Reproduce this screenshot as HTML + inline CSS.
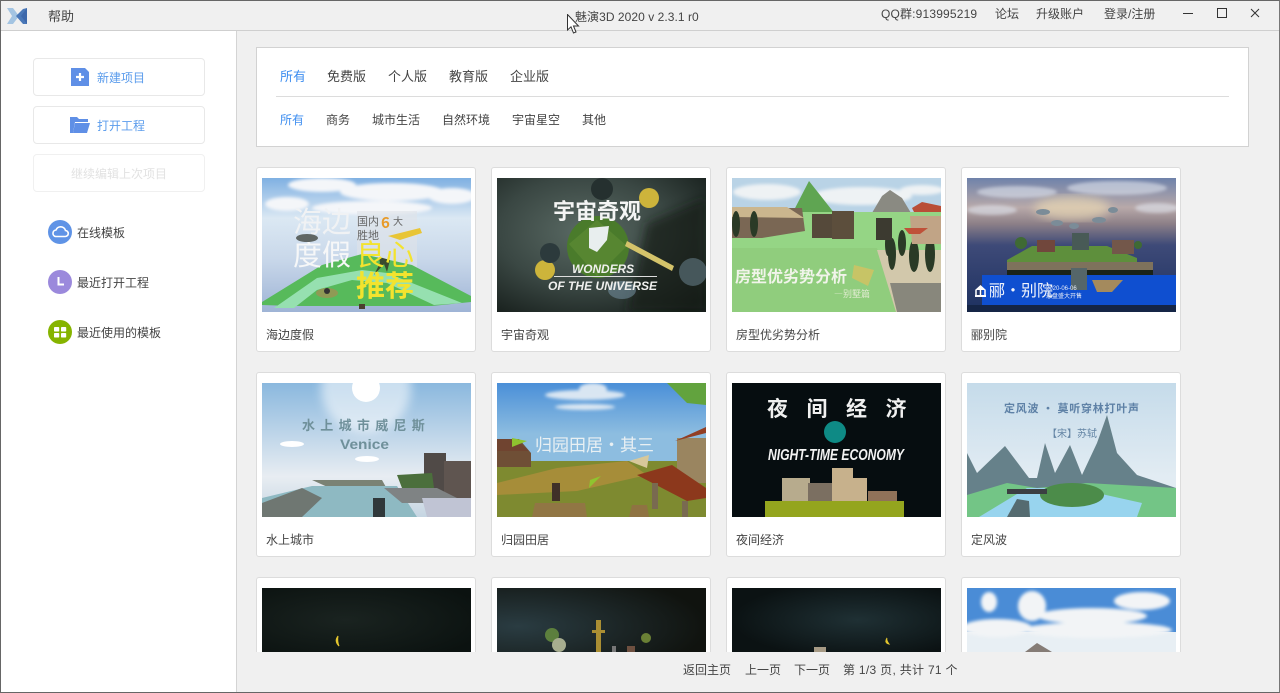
<!DOCTYPE html>
<html lang="zh"><head><meta charset="utf-8"><title>魅演3D</title>
<style>
*{margin:0;padding:0;box-sizing:border-box}
html,body{width:1280px;height:693px;overflow:hidden;background:#f0f0f0}
body{position:relative;font-family:"Liberation Sans","Noto Sans CJK SC",sans-serif;font-size:12px;color:#444}
.a{position:absolute;white-space:nowrap;line-height:16px}
.tb{position:absolute;left:0;top:0;width:1280px;height:31px;background:#f0f0f0;border-bottom:1px solid #cfcfcf}
.side{position:absolute;left:0;top:31px;width:237px;height:662px;background:#fff;border-right:1px solid #d4d4d4}
.btn{position:absolute;left:33px;width:172px;height:38px;border:1px solid #e8e8e8;border-radius:4px;background:#fff}
.panel{position:absolute;left:256px;top:47px;width:993px;height:100px;background:#fff;border:1px solid #d2d2d2}
.clip{position:absolute;left:237px;top:31px;width:1043px;height:621px;overflow:hidden}
.card{position:absolute;width:220px;height:185px;background:#fff;border:1px solid #dcdcdc;border-radius:3px}
.card svg{position:absolute;left:5px;top:10px;width:209px;height:134px;display:block}
.card span{position:absolute;left:9px;top:159px;line-height:16px;color:#444;white-space:nowrap}
.card.s{height:75px;border-bottom:0;border-radius:3px 3px 0 0}
.card.s svg{height:64px}
.frame{position:absolute;left:0;top:0;width:1280px;height:693px;border:1px solid #666;border-right-color:#777;pointer-events:none}
.cn{font-family:"Noto Sans CJK SC",sans-serif;font-weight:700}
.l{font-family:"Noto Sans CJK SC",sans-serif;font-weight:400}
</style></head><body>
<div class="tb"></div>
<svg class="a" style="left:6px;top:7px" width="22" height="18" viewBox="0 0 22 18"><path d="M1 1 L7 1 L13 9 L7 17 L1 17 L6 9Z" fill="#a3c4e2"/><path d="M21 1 L21 17 L17 17 L10 9 L17 2Z" fill="#4a78b8"/><path d="M21 1L21 17L15 9Z" fill="#3d68ab"/></svg>
<div class="a" style="left:48px;top:9px;font-size:13px;color:#444">帮助</div>
<div class="a" style="left:575px;top:9px;color:#444;letter-spacing:.05px">魅演3D 2020 v 2.3.1 r0</div>
<div class="a" style="left:881px;top:6px;color:#444;letter-spacing:.17px">QQ群:913995219</div>
<div class="a" style="left:995px;top:6px;color:#444">论坛</div>
<div class="a" style="left:1036px;top:6px;color:#444">升级账户</div>
<div class="a" style="left:1104px;top:6px;color:#444">登录/注册</div>
<svg class="a" style="left:1180px;top:5px" width="90" height="16" viewBox="0 0 90 16" fill="none" stroke="#333"><path d="M3 8.500H13"/><rect x="37.500" y="3.500" width="9" height="9"/><path d="M71 4L79 12M79 4L71 12"/></svg>

<div class="side"></div>
<div class="btn" style="top:58px"></div>
<div class="btn" style="top:106px"></div>
<div class="btn" style="top:154px;border-color:#f0f0f0"></div>
<svg class="a" style="left:71px;top:68px" width="18" height="18" viewBox="0 0 18 18"><path d="M0 0H14L18 4V18H0Z" fill="#5f8fe6"/><path d="M9 5V13M5 9H13" stroke="#fff" stroke-width="2.200"/></svg>
<svg class="a" style="left:70px;top:116px" width="20" height="18" viewBox="0 0 20 18"><path d="M0 1H7L9 3H18V6H5L3 17H0Z" fill="#5f8fe6"/><path d="M5 7H20L17 17H3Z" fill="#5f8fe6"/></svg>
<div class="a" style="left:97px;top:70px;color:#5b9cec">新建项目</div>
<div class="a" style="left:97px;top:118px;color:#5b9cec">打开工程</div>
<div class="a" style="left:71px;top:166px;color:#e2e2e2">继续编辑上次项目</div>
<svg class="a" style="left:48px;top:220px" width="24" height="24" viewBox="0 0 24 24"><circle cx="12" cy="12" r="12" fill="#5f93e6"/><path d="M7.500 16.500H17a3 3 0 0 0 .5-6 5 5 0 0 0-9.500-.5 3.300 3.300 0 0 0-.5 6.500Z" fill="none" stroke="#fff" stroke-width="1.600"/></svg>
<svg class="a" style="left:48px;top:270px" width="24" height="24" viewBox="0 0 24 24"><circle cx="12" cy="12" r="12" fill="#9b89dc"/><path d="M10.500 7V14.500H16" fill="none" stroke="#fff" stroke-width="2"/></svg>
<svg class="a" style="left:48px;top:320px" width="24" height="24" viewBox="0 0 24 24"><circle cx="12" cy="12" r="12" fill="#86b400"/><g fill="#fff"><rect x="6" y="7" width="5.200" height="4.500" rx=".8"/><rect x="13" y="7" width="5.200" height="4.500" rx=".8"/><rect x="6" y="13" width="5.200" height="4.500" rx=".8"/><rect x="13" y="13" width="5.200" height="4.500" rx=".8"/></g></svg>
<div class="a" style="left:77px;top:225px">在线模板</div>
<div class="a" style="left:77px;top:275px">最近打开工程</div>
<div class="a" style="left:77px;top:325px">最近使用的模板</div>

<div class="panel"></div>
<div class="a" style="left:280px;top:69px;font-size:13px;color:#3e8ef0">所有</div>
<div class="a" style="left:327px;top:69px;font-size:13px">免费版</div>
<div class="a" style="left:388px;top:69px;font-size:13px">个人版</div>
<div class="a" style="left:449px;top:69px;font-size:13px">教育版</div>
<div class="a" style="left:510px;top:69px;font-size:13px">企业版</div>
<div class="a" style="left:276px;top:96px;width:953px;height:1px;background:#dcdcdc"></div>
<div class="a" style="left:280px;top:112px;color:#3e8ef0">所有</div>
<div class="a" style="left:326px;top:112px">商务</div>
<div class="a" style="left:372px;top:112px">城市生活</div>
<div class="a" style="left:442px;top:112px">自然环境</div>
<div class="a" style="left:512px;top:112px">宇宙星空</div>
<div class="a" style="left:582px;top:112px">其他</div>

<div class="clip">
<svg width="0" height="0" style="position:absolute"><defs>
<filter id="b1"><feGaussianBlur stdDeviation="1.500"/></filter>
<filter id="b3"><feGaussianBlur stdDeviation="5"/></filter>
<linearGradient id="sky1" x1="0" y1="0" x2="0" y2="1"><stop offset="0" stop-color="#7fb0e2"/><stop offset=".3" stop-color="#dbe8f3"/><stop offset=".6" stop-color="#c9d8ea"/><stop offset="1" stop-color="#9fb4d6"/></linearGradient>
<linearGradient id="sky4" x1="0" y1="0" x2="0" y2="1"><stop offset="0" stop-color="#6f82aa"/><stop offset=".22" stop-color="#b8a9a9"/><stop offset=".34" stop-color="#8d8088"/><stop offset=".5" stop-color="#3e4a78"/><stop offset="1" stop-color="#1d3160"/></linearGradient>
<linearGradient id="sky5" x1="0" y1="0" x2="0" y2="1"><stop offset="0" stop-color="#8ab8de"/><stop offset=".7" stop-color="#e8edf2"/><stop offset="1" stop-color="#c5d5e2"/></linearGradient>
<linearGradient id="sky6" x1="0" y1="0" x2="0" y2="1"><stop offset="0" stop-color="#4a8fd8"/><stop offset=".6" stop-color="#8dbde0"/></linearGradient>
<linearGradient id="sky8" x1="0" y1="0" x2="0" y2="1"><stop offset="0" stop-color="#c5dbea"/><stop offset=".7" stop-color="#e2ecf3"/></linearGradient>
<radialGradient id="sp2" cx=".42" cy=".4" r=".75"><stop offset="0" stop-color="#5a6a64"/><stop offset=".55" stop-color="#3a4743"/><stop offset="1" stop-color="#171f1c"/></radialGradient>
<radialGradient id="sp9" cx=".4" cy=".5" r=".7"><stop offset="0" stop-color="#1a2320"/><stop offset="1" stop-color="#0b1210"/></radialGradient>
<radialGradient id="sp10" cx=".1" cy=".6" r=".9"><stop offset="0" stop-color="#2a3c42"/><stop offset="1" stop-color="#10130f"/></radialGradient>
<radialGradient id="sp11" cx=".6" cy=".5" r=".6"><stop offset="0" stop-color="#1f3034"/><stop offset="1" stop-color="#0b1213"/></radialGradient>
</defs></svg>

<div class="card" style="left:19px;top:136px">
<svg viewBox="0 0 209 134"><rect width="209" height="134" fill="url(#sky1)"/>
<g fill="#f4f6f9" filter="url(#b1)"><ellipse cx="60" cy="7" rx="34" ry="7"/><ellipse cx="130" cy="14" rx="52" ry="9"/><ellipse cx="25" cy="26" rx="22" ry="7"/><ellipse cx="190" cy="18" rx="24" ry="8"/><ellipse cx="110" cy="30" rx="60" ry="7"/></g>
<rect x="95" y="33" width="60" height="60" fill="#dfe3e8" opacity=".6"/>
<path d="M0 124L60 87L100 76L150 87L209 118V124L170 128H30L0 127Z" fill="#57ba5b"/>
<path d="M12 130L55 100L100 92L125 95L200 125L172 127L125 105L90 102L55 112L32 130Z" fill="#96e0b0"/>
<rect x="97" y="126" width="6" height="5" fill="#4b3f2d"/>
<ellipse cx="65" cy="115" rx="11" ry="5" fill="#8f9a55"/><circle cx="65" cy="113" r="3" fill="#333"/>
<path d="M117 79L128 82L125 94L122 86L112 97L118 85Z" fill="#3a4a2e"/>
<path d="M126 58L158 50L160 55L138 62Z" fill="#e8c536"/>
<text x="31" y="54" class="l" font-size="29" fill="#f0f2f4">海边</text>
<text x="31" y="87" class="l" font-size="29" fill="#f6f7f8">度假</text>
<text x="94" y="87" class="l" font-size="29" fill="#f3e32e">良心</text>
<text x="94" y="118" class="cn" font-size="29" fill="#f3e32e">推荐</text>
<text x="95" y="47" class="l" font-size="11" fill="#666">国内</text>
<text x="119" y="50" class="cn" font-size="15" fill="#e89a28">6</text>
<text x="131" y="47" class="l" font-size="10" fill="#666">大</text>
<text x="95" y="61" class="l" font-size="11" fill="#666">胜地</text>
<ellipse cx="45" cy="60" rx="11" ry="4" fill="#5f6664"/>
</svg><span>海边度假</span></div>

<div class="card" style="left:254px;top:136px">
<svg viewBox="0 0 209 134"><rect width="209" height="134" fill="url(#sp2)"/>
<path d="M150 45L209 20V134H130Z" fill="#141b18" opacity=".7" filter="url(#b3)"/>
<circle cx="101" cy="69" r="31" fill="#4a7b2b"/><path d="M72 66L100 42L130 68L100 98Z" fill="#5c8b34" opacity=".7"/>
<circle cx="105" cy="11" r="11" fill="#25302f"/><circle cx="152" cy="20" r="10" fill="#cdb43b"/><circle cx="48" cy="92" r="10" fill="#cdb43b"/>
<circle cx="53" cy="75" r="10" fill="#2c3a3c"/><circle cx="196" cy="94" r="14" fill="#46575b"/>
<path d="M130 63L177 88L175 93L128 68Z" fill="#d4c36a"/>
<path d="M92 50L112 48L110 62L100 74L92 70Z" fill="#e8eeee"/>
<ellipse cx="125" cy="112" rx="14" ry="9" fill="#6f8a99" opacity=".6"/>
<text x="56" y="41" class="cn" font-size="22" fill="#f4f5f4" letter-spacing="0">宇宙奇观</text>
<text x="75" y="95" font-family="Liberation Sans" font-weight="700" font-style="italic" font-size="12" fill="#f0f0ee" textLength="62" lengthAdjust="spacingAndGlyphs">WONDERS</text>
<rect x="57" y="98" width="103" height="1" fill="#ddd"/>
<text x="51" y="112" font-family="Liberation Sans" font-weight="700" font-style="italic" font-size="11.500" fill="#f0f0ee" textLength="109" lengthAdjust="spacingAndGlyphs">OF THE UNIVERSE</text>
</svg><span>宇宙奇观</span></div>

<div class="card" style="left:489px;top:136px">
<svg viewBox="0 0 209 134"><rect width="209" height="60" fill="#b9d3e6"/>
<g fill="#eef2f4" filter="url(#b1)"><ellipse cx="35" cy="14" rx="34" ry="8"/><ellipse cx="130" cy="18" rx="50" ry="9"/><ellipse cx="190" cy="12" rx="22" ry="5"/></g>
<path d="M60 36L77 3L103 36Z" fill="#5fa552"/>
<path d="M137 40L150 18L158 12L170 20L182 40Z" fill="#8a8a82"/>
<rect y="34" width="209" height="100" fill="#95d585"/>
<path d="M0 70H145L164 125V134H0Z" fill="#90cd7d"/>
<path d="M145 72H209V134H164Z" fill="#d2c8ab"/>
<path d="M158 105H209V134H165Z" fill="#88877c"/>
<path d="M0 30H70L73 53L30 60H0Z" fill="#7a6754"/><path d="M0 29H55L72 40L0 39Z" fill="#cbb68e"/>
<g fill="#2a3a26"><ellipse cx="22" cy="46" rx="4" ry="13"/><ellipse cx="4" cy="46" rx="4" ry="13"/><ellipse cx="160" cy="76" rx="4" ry="16"/><ellipse cx="170" cy="65" rx="4" ry="13"/><ellipse cx="182" cy="78" rx="5" ry="16"/><ellipse cx="156" cy="66" rx="3" ry="12"/><ellipse cx="198" cy="76" rx="5" ry="18"/></g>
<rect x="80" y="36" width="34" height="24" fill="#55493a"/><rect x="100" y="33" width="22" height="28" fill="#5c4e3c"/><rect x="144" y="40" width="16" height="22" fill="#3c3a30"/>
<path d="M178 38H209V66H180Z" fill="#c1a486"/><path d="M180 30L190 24L209 28V34H182Z" fill="#b94e37"/><path d="M172 50H196L188 56H177Z" fill="#bf5139"/>
<text x="3" y="104" class="cn" font-size="16" fill="#f1f4ea">房型优劣势分析</text>
<text x="102" y="119" class="l" font-size="9" fill="#e2ecd2">—别墅篇</text>
<path d="M122 87L142 92L136 108L120 100Z" fill="#c7c466"/>
</svg><span>房型优劣势分析</span></div>

<div class="card" style="left:724px;top:136px">
<svg viewBox="0 0 209 134"><rect width="209" height="134" fill="url(#sky4)"/>
<ellipse cx="105" cy="30" rx="38" ry="12" fill="#e9d8b4" opacity=".7" filter="url(#b3)"/>
<g fill="#dfe4ee" opacity=".6" filter="url(#b1)"><ellipse cx="50" cy="14" rx="40" ry="6"/><ellipse cx="150" cy="10" rx="50" ry="7"/><ellipse cx="25" cy="32" rx="25" ry="5"/><ellipse cx="190" cy="30" rx="22" ry="5"/></g>
<g fill="#7b8c98"><ellipse cx="76" cy="34" rx="7" ry="3"/><ellipse cx="146" cy="32" rx="5" ry="3"/><ellipse cx="90" cy="45" rx="6" ry="3"/><ellipse cx="132" cy="42" rx="7" ry="3"/><ellipse cx="107" cy="48" rx="5" ry="3"/></g>
<path d="M40 82L65 68H140L170 80V88H40Z" fill="#5e8f3c"/>
<path d="M40 84H186V93H40Z" fill="#7e725c"/><rect x="40" y="92" width="146" height="6" fill="#1a2318"/>
<path d="M105 55H122V72H105Z" fill="#485a56"/><rect x="70" y="62" width="18" height="12" fill="#71473c"/><rect x="145" y="62" width="22" height="14" fill="#73574a"/>
<circle cx="54" cy="65" r="6" fill="#3f6a34"/><circle cx="171" cy="67" r="4" fill="#3f6a34"/>
<path d="M15 97H209V127H15Z" fill="#0f4fd0"/>
<path d="M0 127H209V134H0Z" fill="#152546"/>
<rect x="104" y="90" width="16" height="22" fill="#556669"/>
<path d="M125 102L156 102L145 114H130Z" fill="#a48a5d"/>
<path d="M8 119H19V117H8ZM13.500 107L8 112H19Z" fill="#fff"/><path d="M9 112V117M13.500 112V117M18 112V117" stroke="#fff" stroke-width="1.500"/>
<text x="22" y="118" class="l" font-size="16" fill="#f1f4fb">郦·别院</text>
<text x="79" y="112" font-size="6" fill="#e9eef8">2020-06-06</text>
<text x="79" y="120" class="l" font-size="6" fill="#e9eef8">悬盘盛大开售</text>
</svg><span>郦别院</span></div>

<div class="card" style="left:19px;top:341px">
<svg viewBox="0 0 209 134"><rect width="209" height="134" fill="url(#sky5)"/>
<circle cx="104" cy="5" r="45" fill="#fff" opacity=".55" filter="url(#b3)"/><circle cx="104" cy="5" r="14" fill="#fff"/>
<ellipse cx="30" cy="61" rx="12" ry="3" fill="#fff"/><ellipse cx="105" cy="76" rx="12" ry="3" fill="#fff"/>
<rect x="162" y="70" width="22" height="50" fill="#504a47"/><rect x="182" y="78" width="27" height="42" fill="#5f5550"/>
<path d="M135 92L170 90L172 105H140Z" fill="#4b6f3c"/>
<path d="M50 97H120L125 106H70Z" fill="#7a8274"/>
<path d="M50 103H135L155 134H0V115Z" fill="#8eb9c2"/>
<path d="M0 120L40 105L60 115L40 134H0Z" fill="#6f7772"/>
<path d="M122 105H175L205 120H140Z" fill="#7f8384"/><path d="M160 115H209V134H165Z" fill="#c0c4d4"/>
<rect x="111" y="115" width="12" height="19" fill="#30383a"/>
<text x="40" y="47" class="cn" font-size="13" fill="#6f909a" letter-spacing="5.300">水上城市威尼斯</text>
<text x="78" y="66" font-family="Liberation Sans" font-weight="700" font-size="14" fill="#6f909a" textLength="49" lengthAdjust="spacingAndGlyphs">Venice</text>
</svg><span>水上城市</span></div>

<div class="card" style="left:254px;top:341px">
<svg viewBox="0 0 209 134"><rect width="209" height="85" fill="url(#sky6)"/>
<g fill="#e8eff5" opacity=".9" filter="url(#b1)"><ellipse cx="88" cy="12" rx="40" ry="5"/><ellipse cx="88" cy="24" rx="30" ry="3"/><ellipse cx="96" cy="6" rx="14" ry="6"/></g>
<rect y="78" width="209" height="56" fill="#7e8a30"/>
<path d="M0 100L60 85L130 78L150 92L80 108L0 112Z" fill="#a68d39"/>
<path d="M0 56H22L34 70V84H0Z" fill="#6f4f36"/><path d="M0 56H18L32 68H0Z" fill="#704430"/>
<rect x="180" y="55" width="29" height="45" fill="#9a8560"/><path d="M178 58L209 50V44Z" fill="#923f25"/>
<path d="M140 92L175 82L209 105V115L190 118Z" fill="#8c381c"/>
<rect x="155" y="100" width="6" height="26" fill="#796a50"/><rect x="185" y="118" width="6" height="16" fill="#796a50"/>
<path d="M38 120H88L90 134H35Z" fill="#917644"/><path d="M135 122H150L152 134H132Z" fill="#8f7342"/>
<path d="M170 0L209 0V22L190 20Z" fill="#62a33e"/>
<g fill="#8fc42f"><path d="M15 55L30 58L15 64Z"/><path d="M92 105L104 93L93 97Z"/></g>
<path d="M132 78L152 72L150 85Z" fill="#d7c89a"/><rect x="55" y="100" width="8" height="18" fill="#403028"/>
<text x="38" y="68" class="l" font-size="17" fill="#e9f0f3">归园田居·其三</text>
</svg><span>归园田居</span></div>

<div class="card" style="left:489px;top:341px">
<svg viewBox="0 0 209 134"><rect width="209" height="134" fill="#060d10"/>
<circle cx="103" cy="49" r="11" fill="#0e8a85"/>
<path d="M100 120V85H121V95H135V120Z" fill="#c7b18c"/><path d="M50 120V95H78V120Z" fill="#b7ab8d"/><path d="M76 120V100H100V120Z" fill="#7b6f61"/><path d="M136 120V108H165V120Z" fill="#907259"/>
<rect x="33" y="118" width="139" height="16" fill="#94a51e"/>
<text x="35" y="33" class="cn" font-size="21" fill="#f0f0f0" letter-spacing="18.500">夜间经济</text>
<text x="36" y="77" font-family="Liberation Sans" font-weight="700" font-style="italic" font-size="15.500" fill="#f3f3f3" textLength="136" lengthAdjust="spacingAndGlyphs">NIGHT-TIME ECONOMY</text>
</svg><span>夜间经济</span></div>

<div class="card" style="left:724px;top:341px">
<svg viewBox="0 0 209 134"><rect width="209" height="134" fill="url(#sky8)"/>
<path d="M0 70L10 90L38 63L62 95L70 95L78 60L88 90L103 62L115 92L130 60L140 32L150 70L170 92L209 105V134H0Z" fill="#66818a"/>
<path d="M0 112L40 100L70 105L120 100L209 105V134H0Z" fill="#73c586"/>
<path d="M12 134L60 105H80L130 110L175 120L170 134Z" fill="#98d4ee"/>
<ellipse cx="105" cy="112" rx="32" ry="12" fill="#4c8c4a"/>
<path d="M40 106H80V111H40Z" fill="#3b3f42"/><path d="M40 134L50 116L62 118L63 134Z" fill="#556b70"/>
<text x="37" y="29" class="cn" font-size="11" fill="#5e81a6" letter-spacing=".75">定风波 · 莫听穿林打叶声</text>
<text x="80" y="54" class="l" font-size="10" fill="#6384a4">【宋】苏轼</text>
</svg><span>定风波</span></div>

<div class="card s" style="left:19px;top:546px">
<svg viewBox="0 0 209 64"><rect width="209" height="64" fill="url(#sp9)"/><path d="M76 48Q72 53 77 58Q75 53 76 48Z" fill="#e4c62e" stroke="#e4c62e"/></svg></div>
<div class="card s" style="left:254px;top:546px">
<svg viewBox="0 0 209 64"><rect width="209" height="64" fill="url(#sp10)"/><circle cx="55" cy="47" r="7" fill="#5c7f3d"/><circle cx="62" cy="57" r="7" fill="#a7ad8f"/><rect x="99" y="32" width="5" height="32" fill="#aa8e33"/><rect x="95" y="42" width="13" height="3" fill="#aa8e33"/><circle cx="149" cy="50" r="5" fill="#6a8035"/><rect x="115" y="58" width="4" height="6" fill="#777"/><rect x="130" y="58" width="8" height="6" fill="#6e5040"/></svg></div>
<div class="card s" style="left:489px;top:546px">
<svg viewBox="0 0 209 64"><rect width="209" height="64" fill="url(#sp11)"/><path d="M155 50Q152 55 157 56Q154 52 155 50Z" fill="#e4c62e" stroke="#e4c62e"/><rect x="82" y="59" width="12" height="5" fill="#a69a85"/></svg></div>
<div class="card s" style="left:724px;top:546px">
<svg viewBox="0 0 209 64"><rect width="209" height="64" fill="#4a8cd6"/><rect y="44" width="209" height="20" fill="#e8eff4"/><g fill="#f2f4f6" filter="url(#b1)"><ellipse cx="22" cy="14" rx="8" ry="10"/><ellipse cx="65" cy="18" rx="14" ry="15"/><ellipse cx="125" cy="28" rx="55" ry="8"/><ellipse cx="175" cy="13" rx="28" ry="9"/><ellipse cx="30" cy="40" rx="35" ry="9"/><ellipse cx="130" cy="42" rx="75" ry="8"/></g><path d="M58 64L70 55L85 64Z" fill="#857c76"/></svg></div>
</div>

<div class="a" style="left:683px;top:662px">返回主页</div>
<div class="a" style="left:745px;top:662px">上一页</div>
<div class="a" style="left:794px;top:662px">下一页</div>
<div class="a" style="left:843px;top:662px;letter-spacing:.3px">第 1/3 页, 共计 71 个</div>
<div class="frame"></div>
<svg class="a" style="left:567px;top:14px" width="14" height="21" viewBox="0 0 14 21"><path d="M.5.500V16L4 12.800L6.500 19L9 18L6.500 12H11.500Z" fill="#fff" stroke="#333" stroke-width="1"/></svg>
</body></html>
